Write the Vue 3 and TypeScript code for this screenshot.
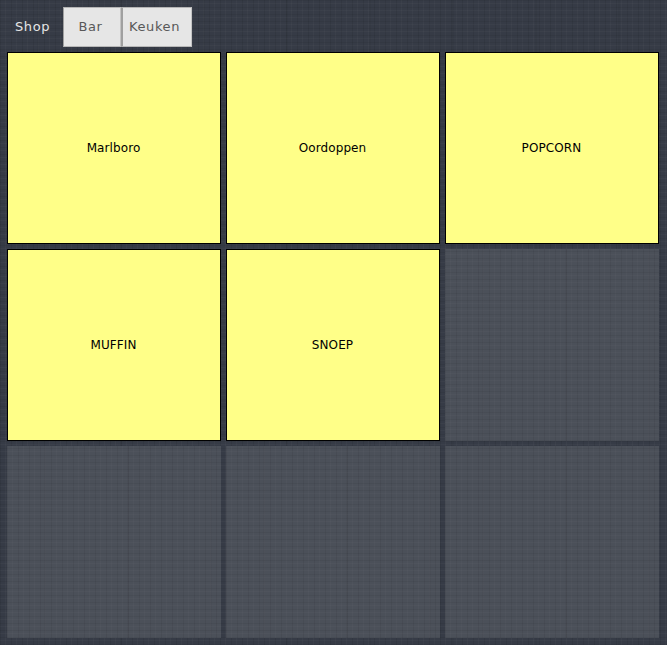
<script setup lang="ts">
interface Cell { id: number; label: string }
const tabs: string[] = ['Bar', 'Keuken']
const cells: Cell[] = ['Marlboro', 'Oordoppen', 'POPCORN', 'MUFFIN', 'SNOEP', '', '', '', ''].map((label, id) => ({ id, label }))
</script>

<template>
  <div class="page">
    <nav class="tabs">
      <div class="tab active">Shop</div>
      <div v-for="t in tabs" :key="t" class="tab">{{ t }}</div>
    </nav>
    <main class="grid">
      <div v-for="c in cells" :key="c.id" class="cell" :class="{ filled: c.label }">{{ c.label }}</div>
    </main>
  </div>
</template>

<style scoped>
.page {
  width: 667px;
  height: 645px;
  box-sizing: border-box;
  padding: 7px 8px 7px 7px;
  overflow: hidden;
  font-family: "DejaVu Sans", sans-serif;
  background-color: #363b46;
  background-image:
    repeating-linear-gradient(0deg, rgba(0,0,0,0.06) 0 1px, transparent 1px 4px, rgba(255,255,255,0.025) 4px 5px, transparent 5px 7px),
    repeating-linear-gradient(90deg, rgba(0,0,0,0.07) 0 1px, transparent 1px 5px, rgba(255,255,255,0.025) 5px 6px, transparent 6px 11px),
    repeating-linear-gradient(90deg, transparent 0 37px, rgba(0,0,0,0.04) 37px 39px, transparent 39px 83px);
}
.tabs {
  display: flex;
  height: 40px;
  margin-bottom: 5px;
}
.tab {
  box-sizing: border-box;
  height: 40px;
  display: flex;
  align-items: center;
  justify-content: center;
  padding: 0 5px 2px 0;
  font-size: 13px;
  letter-spacing: 0.6px;
  color: #585858;
  background: #e6e6e6;
  border-left: 2px solid #a0a0a0;
  border-top: 1px solid #b4b4b4;
  border-right: 1px solid #c4c4c4;
  border-bottom: 1px solid #b8b8b8;
  width: 58px;
}
.tab:nth-child(2) { border-left-width: 1px; padding-left: 1px; padding-right: 4px; }
.tab:last-child { width: 71px; }
.tab.active {
  width: 56px;
  padding-right: 6px;
  background: transparent;
  border-color: transparent;
  color: #e6e6e6;
}
.grid {
  display: grid;
  grid-template-columns: repeat(3, 214px);
  grid-template-rows: repeat(3, 192px);
  gap: 5px;
}
.cell {
  box-sizing: border-box;
  display: flex;
  align-items: center;
  justify-content: center;
  background-color: #4b5059;
  background-image:
    repeating-linear-gradient(0deg, rgba(0,0,0,0.05) 0 1px, transparent 1px 4px, rgba(255,255,255,0.02) 4px 5px, transparent 5px 7px),
    repeating-linear-gradient(90deg, rgba(0,0,0,0.06) 0 1px, transparent 1px 5px, rgba(255,255,255,0.02) 5px 6px, transparent 6px 11px),
    repeating-linear-gradient(90deg, transparent 0 37px, rgba(0,0,0,0.03) 37px 39px, transparent 39px 83px);
}
.cell.filled {
  background: #ffff88;
  border: 1px solid #000;
  color: #000;
  font-size: 12px;
  letter-spacing: 0.1px;
  padding-right: 1px;
}
</style>
